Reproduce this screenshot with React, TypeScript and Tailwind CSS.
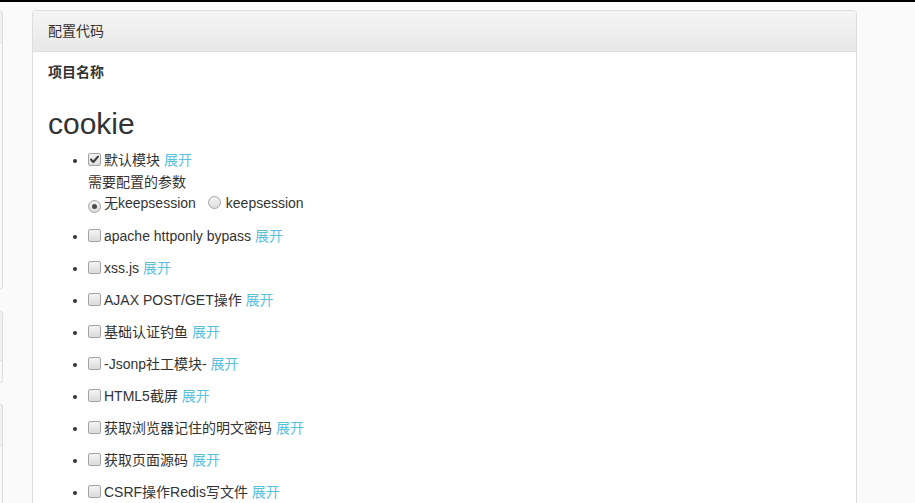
import React from "react";

const items = [
  "apache httponly bypass",
  "xss.js",
  "AJAX POST/GET操作",
  "基础认证钓鱼",
  "-Jsonp社工模块-",
  "HTML5截屏",
  "获取浏览器记住的明文密码",
  "获取页面源码",
  "CSRF操作Redis写文件",
];

function Checkbox({ checked = false }: { checked?: boolean }) {
  return (
    <span className="relative inline-block w-[13px] h-[13px] rounded-[2px] border border-[#a3a3a3] bg-gradient-to-b from-[#f4f4f4] to-[#dcdcdc] mr-[3px] align-[-1px] shrink-0">
      {checked && (
        <svg viewBox="0 0 13 13" className="absolute left-[-1px] top-[-1px] w-[13px] h-[13px]">
          <path d="M3 6.5 L5.3 9 L10 3.6" fill="none" stroke="#3a3a3a" strokeWidth="2" strokeLinecap="round" strokeLinejoin="round" />
        </svg>
      )}
    </span>
  );
}

function Radio({ checked = false }: { checked?: boolean }) {
  return (
    <span className="relative inline-flex items-center justify-center w-[13px] h-[13px] rounded-full border border-[#a3a3a3] bg-gradient-to-b from-[#f4f4f4] to-[#dcdcdc] mr-[3px] align-[-1px] shrink-0">
      {checked && <span className="block w-[5px] h-[5px] rounded-full bg-[#4a4a4a]" />}
    </span>
  );
}

export default function App() {
  return (
    <div
      className="w-[915px] h-[503px] overflow-hidden bg-[#fafafa] text-[14px] leading-[20px] text-[#333]"
      style={{ fontFamily: '"Liberation Sans", "Noto Sans CJK SC", sans-serif' }}
    >
      <div className="h-[2px] bg-black" />
      <div className="flex items-start">
        {/* left column, mostly off-screen */}
        <div className="w-[3px] flex flex-col pt-[9px]">
          <div className="h-[278px] border border-l-0 border-[#ddd] rounded-r-[4px] bg-[#f9f9f9] flex flex-col overflow-hidden">
            <div className="h-[31px] bg-[#f0f0f0] border-b border-[#e2e2e2]" />
          </div>
          <div className="mt-[22px] h-[72px] border border-l-0 border-[#ddd] rounded-r-[4px] bg-[#f9f9f9] flex flex-col overflow-hidden">
            <div className="h-[49px] bg-[#f0f0f0] border-b border-[#e2e2e2]" />
          </div>
          <div className="mt-[21px] h-[200px] border border-l-0 border-[#ddd] rounded-r-[4px] bg-[#f9f9f9] flex flex-col overflow-hidden">
            <div className="h-[41px] bg-[#f0f0f0] border-b border-[#e2e2e2]" />
          </div>
        </div>

        {/* main panel */}
        <div className="ml-[29px] mt-[8px] w-[825px] h-[600px] bg-white border border-[#ddd] rounded-[4px] overflow-hidden">
          <div className="h-[41px] px-[15px] py-[10px] border-b border-[#ddd] bg-gradient-to-b from-[#f5f5f5] to-[#e8e8e8]">
            配置代码
          </div>
          <div className="px-[15px] pt-[10px]">
            <div className="font-bold mb-[5px]">项目名称</div>
            <h2 className="mt-[25px] mb-[10px] text-[30px] leading-[33px] font-normal">cookie</h2>
            <ul className="list-disc pl-[40px]">
              <li className="mb-[12px]">
                <div className="h-[20px]">
                  <Checkbox checked />
                  默认模块 <span className="text-[#5bc0de]">展开</span>
                </div>
                <div className="mt-[2px] h-[21px] leading-[21px]">需要配置的参数</div>
                <div className="h-[21px] leading-[21px]">
                  <Radio checked />
                  无keepsession
                  <span className="inline-block w-[12px]" />
                  <Radio />
                  <span className="ml-[2px]">keepsession</span>
                </div>
              </li>
              {items.map((t) => (
                <li key={t} className="mb-[12px]">
                  <div className="h-[20px]">
                    <Checkbox />
                    {t} <span className="text-[#5bc0de]">展开</span>
                  </div>
                </li>
              ))}
            </ul>
          </div>
        </div>
      </div>
    </div>
  );
}
